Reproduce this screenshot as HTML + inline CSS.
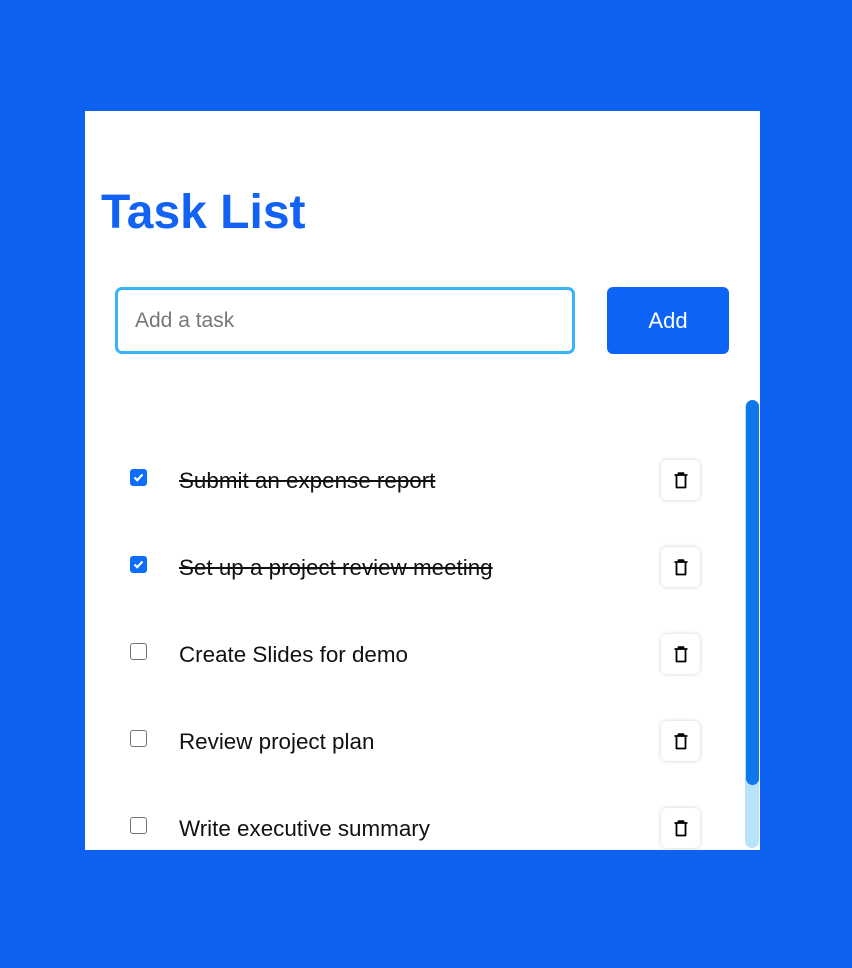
<!DOCTYPE html>
<html><head><meta charset="utf-8"><style>
html,body{margin:0;padding:0;width:852px;height:968px;overflow:hidden;background:#0e62f1;font-family:"Liberation Sans",Arial,sans-serif}
.card{position:absolute;left:85px;top:111px;width:675px;height:739px;background:#fff;overflow:hidden}
h1{position:absolute;left:16px;top:74px;margin:0;font-size:48px;font-weight:bold;color:#1262f3;line-height:56px}
.inp{position:absolute;left:30px;top:176px;height:61px;border:3px solid #39b3fb;border-radius:7px;box-sizing:content-box;font-size:21px;color:#777;line-height:61px;padding-left:17px;width:437px}
.btn{position:absolute;left:522px;top:176px;width:122px;height:67px;background:#0d63f5;border-radius:6px;color:#fff;font-size:22px;text-align:center;line-height:67px}
.track{position:absolute;left:660px;top:289px;width:14px;height:448px;background:#b8e3fb;border-radius:7px}
.thumb{position:absolute;left:661px;top:289px;width:13px;height:385px;background:#0e77e9;border-radius:7px}
.row{position:absolute;left:0;width:640px;height:40px}
.cb{position:absolute;left:45px;top:9px;width:17px;height:17px;border:1.5px solid #767676;border-radius:3px;background:#fff;box-sizing:border-box}
.cb.on{background:#0d6efd;border-color:#0d6efd}
.cb.on svg{position:absolute;left:1px;top:1px}
.t{position:absolute;left:94px;top:8px;font-size:22.4px;color:#111;line-height:26px;white-space:nowrap}
.t.done{text-decoration:line-through}
.del{position:absolute;left:576px;top:0;width:39px;height:40px;background:#fff;border-radius:6px;box-shadow:0 0 4px rgba(0,0,0,.18)}
.del svg{position:absolute;left:10px;top:10px}
</style></head><body>
<div class="card">
<h1>Task List</h1>
<div class="inp">Add a task</div>
<div class="btn">Add</div>
<div class="track"></div><div class="thumb"></div>

<div class="row" style="top:349px"><div class="cb on"><svg width="13" height="13" viewBox="0 0 13 13"><path d="M2.5 6.5l2.7 2.7L10.5 3.5" stroke="#fff" stroke-width="2.2" fill="none"/></svg></div><div class="t done">Submit an expense report</div><div class="del"><svg width="20" height="20" viewBox="0 0 20 20"><path d="M3.5 5h13M7.5 5V3.2h5V5M5.5 5v12.5h9V5" stroke="#000" stroke-width="1.8" fill="none" stroke-linejoin="round"/></svg></div></div>

<div class="row" style="top:436px"><div class="cb on"><svg width="13" height="13" viewBox="0 0 13 13"><path d="M2.5 6.5l2.7 2.7L10.5 3.5" stroke="#fff" stroke-width="2.2" fill="none"/></svg></div><div class="t done">Set up a project review meeting</div><div class="del"><svg width="20" height="20" viewBox="0 0 20 20"><path d="M3.5 5h13M7.5 5V3.2h5V5M5.5 5v12.5h9V5" stroke="#000" stroke-width="1.8" fill="none" stroke-linejoin="round"/></svg></div></div>

<div class="row" style="top:523px"><div class="cb"></div><div class="t">Create Slides for demo</div><div class="del"><svg width="20" height="20" viewBox="0 0 20 20"><path d="M3.5 5h13M7.5 5V3.2h5V5M5.5 5v12.5h9V5" stroke="#000" stroke-width="1.8" fill="none" stroke-linejoin="round"/></svg></div></div>

<div class="row" style="top:610px"><div class="cb"></div><div class="t">Review project plan</div><div class="del"><svg width="20" height="20" viewBox="0 0 20 20"><path d="M3.5 5h13M7.5 5V3.2h5V5M5.5 5v12.5h9V5" stroke="#000" stroke-width="1.8" fill="none" stroke-linejoin="round"/></svg></div></div>

<div class="row" style="top:697px"><div class="cb"></div><div class="t">Write executive summary</div><div class="del"><svg width="20" height="20" viewBox="0 0 20 20"><path d="M3.5 5h13M7.5 5V3.2h5V5M5.5 5v12.5h9V5" stroke="#000" stroke-width="1.8" fill="none" stroke-linejoin="round"/></svg></div></div>
</div>
</body></html>
